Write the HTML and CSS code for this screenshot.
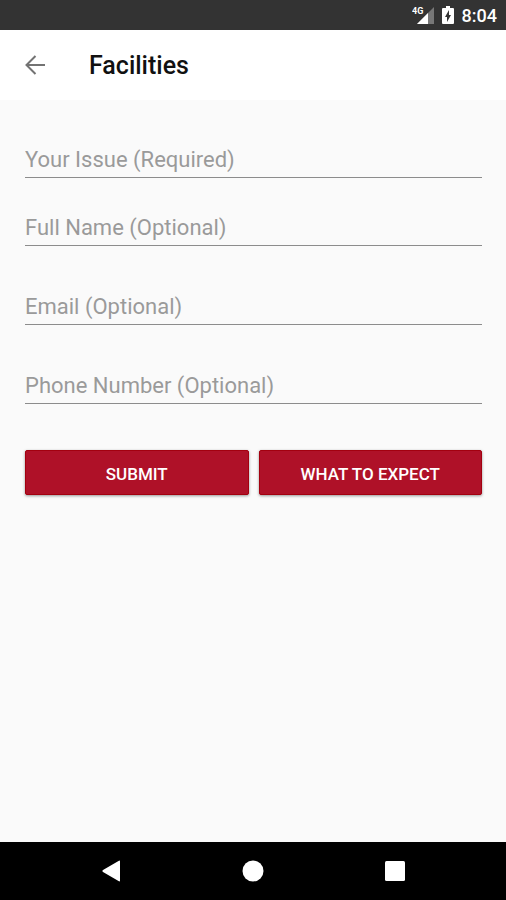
FILE: index.html
```html
<!DOCTYPE html>
<html lang="en">
<head>
  <meta charset="UTF-8">
  <meta name="viewport" content="width=device-width, initial-scale=1.0">
  <title>Facilities</title>
  <link rel="stylesheet" href="styles.css">
</head>
<body>
  <div class="status-bar">
    <svg class="signal-icon" width="22" height="18" viewBox="0 0 22 18" aria-hidden="true">
      <path d="M22 1V18H5Z" fill="#777"/>
      <path d="M16 7V18H5Z" fill="#fff"/>
      <path d="M0 0H12V8L10 10H0Z" fill="#333"/>
      <text class="signal-label" x="0" y="8">4G</text>
    </svg>
    <svg class="battery-icon" width="12" height="18" viewBox="0 0 12 18" aria-hidden="true">
      <path d="M4 0h4v2h3q1 0 1 1v14q0 1-1 1H1q-1 0-1-1V3q0-1 1-1h3z" fill="#fff"/>
      <path d="M7 4v5h2l-4 7v-5H3z" fill="#333"/>
    </svg>
    <span class="clock">8:04</span>
  </div>

  <header class="header">
    <button type="button" class="back-button" aria-label="Back">
      <svg width="20" height="20" viewBox="0 0 20 20" fill="none" stroke="#737373" stroke-width="2">
        <path d="M20 10H2M10.500 1L1.500 10L10.500 19"/>
      </svg>
    </button>
    <h1>Facilities</h1>
  </header>

  <main class="content">
    <form class="form">
      <input type="text" class="input-field" aria-label="Your Issue" placeholder="Your Issue (Required)" required>
      <div class="contact-fields">
        <input type="text" class="input-field" aria-label="Full Name" placeholder="Full Name (Optional)">
        <input type="email" class="input-field" aria-label="Email" placeholder="Email (Optional)">
        <input type="tel" class="input-field" aria-label="Phone Number" placeholder="Phone Number (Optional)">
      </div>
      <div class="actions">
        <button type="submit" class="button">SUBMIT</button>
        <button type="button" class="button">WHAT TO EXPECT</button>
      </div>
    </form>
  </main>

  <nav class="nav-bar">
    <button type="button" class="nav-button" aria-label="Back">
      <svg width="22" height="22" viewBox="0 0 22 22" fill="#fff">
        <path d="M20 1.500V20.500Q20 22 18.500 21L3 12Q1.500 11 3 10L18.500 1Q20 0 20 1.500Z"/>
      </svg>
    </button>
    <button type="button" class="nav-button" aria-label="Home">
      <svg width="22" height="22" viewBox="0 0 22 22" fill="#fff">
        <circle cx="11" cy="11" r="10.500"/>
      </svg>
    </button>
    <button type="button" class="nav-button" aria-label="Recent apps">
      <svg width="22" height="22" viewBox="0 0 22 22" fill="#fff">
        <rect x="1" y="1" width="20" height="20" rx="1.500"/>
      </svg>
    </button>
  </nav>
</body>
</html>
```
FILE: styles.css
```css
* {
  box-sizing: border-box;
}

body {
  display: flex;
  flex-direction: column;
  min-height: 100vh;
  margin: 0;
  font-family: Roboto, sans-serif;
  background-color: #FAFAFA;
}

button {
  padding: 0;
  border: none;
  background: none;
  font-family: inherit;
  cursor: pointer;
}

svg {
  display: block;
}

.status-bar {
  display: flex;
  align-items: center;
  justify-content: flex-end;
  gap: 8px;
  height: 30px;
  padding: 0 9px;
  background-color: #333;
  color: white;
}

.signal-label {
  font-size: 9px;
  font-weight: 700;
  fill: white;
}

.clock {
  font-size: 18px;
  font-weight: 500;
}

.header {
  display: flex;
  align-items: center;
  gap: 44px;
  height: 70px;
  padding: 0 25px;
  background-color: white;
}

.header h1 {
  margin: 0;
  font-size: 25px;
  font-weight: 500;
  color: #111;
}

.content {
  flex: 1;
  padding: 40px 24px 40px 25px;
}

.form {
  display: flex;
  flex-direction: column;
  gap: 30px;
}

.contact-fields {
  display: flex;
  flex-direction: column;
  gap: 41px;
}

.input-field {
  width: 100%;
  height: 38px;
  padding: 2px 0 0;
  border: none;
  border-bottom: 1px solid #8C8C8C;
  border-radius: 0;
  background: none;
  font-family: inherit;
  font-size: 22px;
  color: #212121;
}

.input-field::placeholder {
  color: #9A9A9A;
  opacity: 1;
}

.input-field:focus {
  outline: none;
  border-color: #AF1128;
}

.actions {
  display: grid;
  grid-template-columns: 1fr 1fr;
  gap: 10px;
  padding-top: 16px;
}

.button {
  height: 45px;
  padding-top: 2px;
  border: 1px solid #A3000F;
  border-radius: 2px;
  background-color: #AF1128;
  box-shadow: 0 1px 3px rgba(0, 0, 0, 0.4);
  color: white;
  font-size: 17px;
  font-weight: 500;
}

.nav-bar {
  display: grid;
  grid-template-columns: repeat(3, 1fr);
  height: 58px;
  padding: 0 40px;
  background-color: black;
}

.nav-button {
  display: flex;
  align-items: center;
  justify-content: center;
}
```
